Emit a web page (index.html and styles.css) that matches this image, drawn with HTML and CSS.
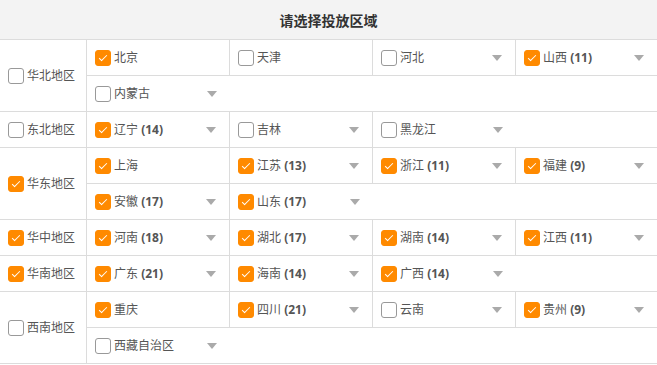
FILE: index.html
```html
<!DOCTYPE html>
<html lang="zh-CN">
<head>
<meta charset="utf-8">
<title>请选择投放区域</title>
<link rel="stylesheet" href="styles.css">
</head>
<body>
<div class="table">
  <div class="header">请选择投放区域</div>

  <div class="region">
    <div class="region-name"><span class="cb"></span>华北地区</div>
    <div class="region-rows">
      <div class="prow">
        <div class="cell"><span class="cb on"></span>北京</div>
        <div class="cell"><span class="cb"></span>天津</div>
        <div class="cell"><span class="cb"></span>河北<span class="arrow"></span></div>
        <div class="cell"><span class="cb on"></span>山西 <b>(11)</b><span class="arrow"></span></div>
      </div>
      <div class="prow">
        <div class="cell"><span class="cb"></span>内蒙古<span class="arrow"></span></div>
      </div>
    </div>
  </div>

  <div class="region">
    <div class="region-name"><span class="cb"></span>东北地区</div>
    <div class="region-rows">
      <div class="prow">
        <div class="cell"><span class="cb on"></span>辽宁 <b>(14)</b><span class="arrow"></span></div>
        <div class="cell"><span class="cb"></span>吉林<span class="arrow"></span></div>
        <div class="cell"><span class="cb"></span>黑龙江<span class="arrow"></span></div>
      </div>
    </div>
  </div>

  <div class="region">
    <div class="region-name"><span class="cb on"></span>华东地区</div>
    <div class="region-rows">
      <div class="prow">
        <div class="cell"><span class="cb on"></span>上海</div>
        <div class="cell"><span class="cb on"></span>江苏 <b>(13)</b><span class="arrow"></span></div>
        <div class="cell"><span class="cb on"></span>浙江 <b>(11)</b><span class="arrow"></span></div>
        <div class="cell"><span class="cb on"></span>福建 <b>(9)</b><span class="arrow"></span></div>
      </div>
      <div class="prow">
        <div class="cell"><span class="cb on"></span>安徽 <b>(17)</b><span class="arrow"></span></div>
        <div class="cell"><span class="cb on"></span>山东 <b>(17)</b><span class="arrow"></span></div>
      </div>
    </div>
  </div>

  <div class="region">
    <div class="region-name"><span class="cb on"></span>华中地区</div>
    <div class="region-rows">
      <div class="prow">
        <div class="cell"><span class="cb on"></span>河南 <b>(18)</b><span class="arrow"></span></div>
        <div class="cell"><span class="cb on"></span>湖北 <b>(17)</b><span class="arrow"></span></div>
        <div class="cell"><span class="cb on"></span>湖南 <b>(14)</b><span class="arrow"></span></div>
        <div class="cell"><span class="cb on"></span>江西 <b>(11)</b><span class="arrow"></span></div>
      </div>
    </div>
  </div>

  <div class="region">
    <div class="region-name"><span class="cb on"></span>华南地区</div>
    <div class="region-rows">
      <div class="prow">
        <div class="cell"><span class="cb on"></span>广东 <b>(21)</b><span class="arrow"></span></div>
        <div class="cell"><span class="cb on"></span>海南 <b>(14)</b><span class="arrow"></span></div>
        <div class="cell"><span class="cb on"></span>广西 <b>(14)</b><span class="arrow"></span></div>
      </div>
    </div>
  </div>

  <div class="region">
    <div class="region-name"><span class="cb"></span>西南地区</div>
    <div class="region-rows">
      <div class="prow">
        <div class="cell"><span class="cb on"></span>重庆</div>
        <div class="cell"><span class="cb on"></span>四川 <b>(21)</b><span class="arrow"></span></div>
        <div class="cell"><span class="cb"></span>云南<span class="arrow"></span></div>
        <div class="cell"><span class="cb on"></span>贵州 <b>(9)</b><span class="arrow"></span></div>
      </div>
      <div class="prow">
        <div class="cell"><span class="cb"></span>西藏自治区<span class="arrow"></span></div>
      </div>
    </div>
  </div>
</div>
</body>
</html>
```

FILE: styles.css
```css
html, body {
  margin: 0;
  padding: 0;
  overflow: hidden;
  background: #fff;
}

body {
  font-family: "Noto Sans", "Noto Sans CJK SC", sans-serif;
  font-size: 12px;
  color: #555;
}

.table {
  width: 657px;
}

.header {
  box-sizing: border-box;
  height: 40px;
  padding-top: 1px;
  border-bottom: 1px solid #dcdcdc;
  background: #f3f3f3;
  display: flex;
  align-items: center;
  justify-content: center;
  font-size: 14px;
  font-weight: bold;
  color: #333;
}

.region {
  display: flex;
  border-bottom: 1px solid #dcdcdc;
}

.region-name {
  box-sizing: border-box;
  width: 87px;
  flex: none;
  border-right: 1px solid #dcdcdc;
  display: flex;
  align-items: center;
  padding-left: 8px;
  line-height: 16px;
}

.region-rows {
  flex: 1;
  display: flex;
  flex-direction: column;
}

.prow {
  display: flex;
  height: 35px;
  border-bottom: 1px solid #dcdcdc;
}

.prow:last-child {
  border-bottom: none;
}

.cell {
  width: 143px;
  flex: none;
  box-sizing: border-box;
  border-right: 1px solid #dcdcdc;
  display: flex;
  align-items: center;
  padding: 1px 13px 0 8px;
  line-height: 16px;
  white-space: pre;
}

.cell:last-child {
  border-right: none;
}

.prow .cell:nth-child(4) {
  flex: 1;
  width: auto;
}

.cell b {
  font-weight: bold;
  color: #555;
}

.cb {
  width: 16px;
  height: 16px;
  box-sizing: border-box;
  border: 1px solid #999;
  border-radius: 3px;
  background: #fff;
  margin-right: 3px;
  flex: none;
  position: relative;
}

.cb.on {
  border-color: #ff8a00;
  background: #ff8a00;
}

.cb.on::after {
  content: "";
  position: absolute;
  left: 3px;
  top: 4px;
  width: 7px;
  height: 3px;
  border-left: 1.5px solid #fff;
  border-bottom: 1.5px solid #fff;
  transform: rotate(-45deg);
}

.arrow {
  margin-left: auto;
  width: 0;
  height: 0;
  border-left: 5.5px solid transparent;
  border-right: 5.5px solid transparent;
  border-top: 6px solid #aaa;
  flex: none;
}
```
